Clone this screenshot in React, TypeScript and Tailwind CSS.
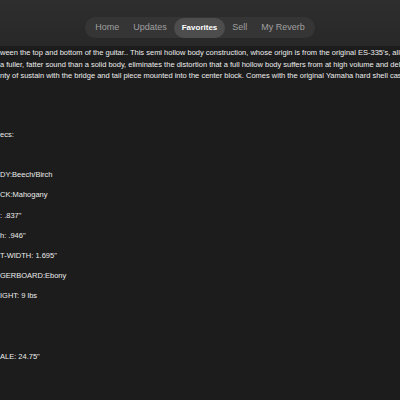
const navItems = ["Home", "Updates", "Favorites", "Sell", "My Reverb"];

const paragraph = [
  "ween the top and bottom of the guitar..  This semi hollow body construction, whose origin is from the original ES-335's, allows",
  "a fuller, fatter sound than a solid body, eliminates the distortion that a full hollow body suffers from at high volume and delivers",
  "nty of sustain with the bridge and tail piece mounted into the center block. Comes with the original Yamaha hard shell case.",
];

const specs = [
  "",
  "",
  "ecs:",
  "",
  "DY:Beech/Birch",
  "CK:Mahogany",
  ": .837\"",
  "h: .946\"",
  "T-WIDTH: 1.695\"",
  "GERBOARD:Ebony",
  "IGHT: 9 lbs",
  "",
  "",
  "ALE: 24.75\"",
];

export default function App() {
  return (
    <div className="h-[400px] w-[400px] overflow-hidden bg-[#1c1c1c] font-['Liberation_Sans',Arial,sans-serif] text-[#ececec]">
      <header className="flex h-[46px] items-center justify-center bg-gradient-to-b from-[#2e2e2e] to-[#282828]">
        <nav className="mt-[9px] flex h-[21px] items-center rounded-full bg-[#353535] px-[3px]">
          {navItems.map((item) => (
            <span
              key={item}
              className={
                item === "Favorites"
                  ? "rounded-full bg-[#4d4d4d] px-[8px] py-[4px] text-[8px] font-bold text-white"
                  : "px-[7px] py-[3px] text-[9px] text-[#a0a0a0]"
              }
            >
              {item}
            </span>
          ))}
        </nav>
      </header>
      <main className="whitespace-nowrap pt-[1px] text-[7.5px]">
        <div className="leading-[11.5px]">
          {paragraph.map((line, i) => (
            <div key={i}>{line}</div>
          ))}
        </div>
        <div className="pt-[3px] leading-[20.2px]">
          {specs.map((line, i) => (
            <div key={i} className="h-[20.2px]">
              {line}
            </div>
          ))}
        </div>
      </main>
    </div>
  );
}
